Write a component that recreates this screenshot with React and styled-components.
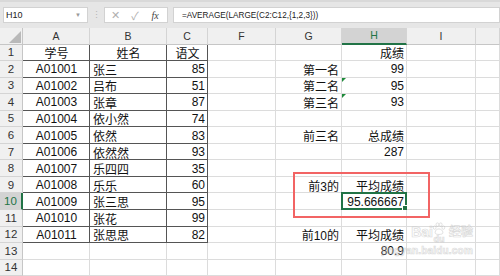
import { Fragment } from "react";
import styled, { createGlobalStyle } from "styled-components";

const GlobalStyle = createGlobalStyle`
  html, body {
    margin: 0;
    padding: 0;
    background: #ffffff;
  }
  body {
    font-family: "Liberation Sans", "Noto Sans CJK SC", sans-serif;
  }
`;

const Window = styled.div`
  position: relative;
  width: 500px;
  height: 276px;
  overflow: hidden;
  background: #ffffff;
`;

const FormulaBar = styled.div`
  height: 28px;
  box-sizing: border-box;
  display: flex;
  align-items: flex-start;
  padding: 5px 0 0 3px;
  background: #e6e6e6;
  border-top: 2px solid #d9d9d9;
`;

const Box = styled.div`
  height: 16px;
  box-sizing: border-box;
  background: #ffffff;
  border: 1px solid #d2d2d2;
  display: flex;
  align-items: center;
  width: ${(p) => p.$w || "auto"};
  flex: ${(p) => (p.$grow ? 1 : "none")};
`;

const NameText = styled.span`
  flex: 1;
  padding-left: 2px;
  font-size: 9px;
  color: #222;
`;

const Caret = styled.span`
  font-size: 6px;
  color: #9a9a9a;
  padding-right: 6px;
`;

const Dots = styled.div`
  width: 16px;
  height: 16px;
  display: flex;
  align-items: center;
  justify-content: center;
  font-size: 9px;
  color: #b5b5b5;
`;

const IconBtn = styled.span`
  width: 20px;
  display: flex;
  justify-content: center;
  font-size: ${(p) => p.$size || "10px"};
  color: ${(p) => p.$color || "#b0b0b0"};
  font-family: ${(p) => (p.$serif ? '"Liberation Serif", serif' : "inherit")};
  font-style: ${(p) => (p.$serif ? "italic" : "normal")};
`;

const Gap = styled.div`
  width: 5px;
`;

const FormulaText = styled.span`
  padding-left: 8px;
  font-size: 8.2px;
  color: #222;
  white-space: nowrap;
`;

const Sheet = styled.div`
  display: grid;
  grid-template-columns: 23px 67px 77px 41px 68px 66px 65px 69px 1fr;
  grid-template-rows: 16.5px repeat(14, 16.55px);
`;

const ColHead = styled.div`
  box-sizing: border-box;
  display: flex;
  align-items: center;
  justify-content: center;
  font-size: 10.5px;
  color: ${(p) => (p.$active ? "#217346" : "#333")};
  background: ${(p) => (p.$active ? "#d3d3d3" : "#f0f0f0")};
  border-right: 1px solid #d4d4d4;
  border-bottom: ${(p) => (p.$active ? "2px solid #217346" : "1px solid #c6c6c6")};
`;

const Corner = styled.div`
  box-sizing: border-box;
  background: #f0f0f0;
  border-right: 1px solid #c6c6c6;
  border-bottom: 1px solid #c6c6c6;
  display: flex;
  align-items: flex-end;
  justify-content: flex-end;
  padding: 0 1px 1px 0;
`;

const RowHead = styled.div`
  box-sizing: border-box;
  display: flex;
  align-items: center;
  justify-content: center;
  font-size: 11.5px;
  color: ${(p) => (p.$active ? "#217346" : "#333")};
  background: ${(p) => (p.$active ? "#d3d3d3" : "#f0f0f0")};
  border-right: ${(p) => (p.$active ? "2px solid #217346" : "1px solid #c6c6c6")};
  border-bottom: 1px solid #d4d4d4;
`;

const Cell = styled.div`
  position: relative;
  box-sizing: border-box;
  display: flex;
  align-items: center;
  justify-content: ${(p) =>
    p.$align === "right" ? "flex-end" : p.$align === "center" ? "center" : "flex-start"};
  padding: 1px 2px 0 3px;
  font-size: 12px;
  color: #111;
  white-space: nowrap;
  border-right: 1px solid ${(p) => (p.$boxed ? "#555" : "#dcdcdc")};
  border-bottom: 1px solid ${(p) => (p.$boxed ? "#555" : "#dcdcdc")};
`;

const ErrorMark = styled.span`
  position: absolute;
  left: 0;
  top: 0;
  width: 0;
  height: 0;
  border-top: 4px solid #1e8a3a;
  border-right: 4px solid transparent;
`;

const Selection = styled.span`
  position: absolute;
  left: -1px;
  top: -1px;
  right: -1px;
  bottom: -1px;
  border: 2px solid #217346;
  pointer-events: none;

  &::after {
    content: "";
    position: absolute;
    right: -3px;
    bottom: -3px;
    width: 4px;
    height: 4px;
    background: #217346;
    border: 1px solid #fff;
  }
`;

const Highlight = styled.div`
  position: absolute;
  left: 293px;
  top: 172px;
  width: 137px;
  height: 46px;
  box-sizing: border-box;
  border: 2px solid #f26464;
  pointer-events: none;
`;

const Watermark = styled.div`
  position: absolute;
  left: 375px;
  top: 222px;
  width: 98px;
  display: flex;
  flex-direction: column;
  align-items: flex-end;
  gap: 1px;
  pointer-events: none;
  opacity: 0.4;
`;

const MarkLine = styled.div`
  display: flex;
  align-items: center;
  font-family: "Liberation Sans", "Noto Sans CJK SC", sans-serif;
  font-weight: 700;
  font-size: ${(p) => p.$size};
  line-height: 1.1;
  color: #ffffff;
  -webkit-text-stroke: 0.7px #a8a8a8;
  letter-spacing: ${(p) => p.$spacing || "0"};
`;

const PawStack = styled.span`
  display: flex;
  flex-direction: column;
  align-items: center;
  font-size: 9px;
  line-height: 1;
  margin-left: -1px;
`;

const Small = styled.span`
  font-size: ${(p) => p.$size};
  margin-left: ${(p) => p.$ml || "0"};
`;

const cols = ["A", "B", "C", "F", "G", "H", "I", ""];

const rows = [
  [["学号", "center", true], ["姓名", "center", true], ["语文", "center", true], null, null, ["成绩", "right"]],
  [["A01001", "center", true], ["张三", "left", true], ["85", "right", true], null, ["第一名", "right"], ["99", "right"]],
  [["A01002", "center", true], ["吕布", "left", true], ["51", "right", true], null, ["第二名", "right"], ["95", "right", false, "err"]],
  [["A01003", "center", true], ["张章", "left", true], ["87", "right", true], null, ["第三名", "right"], ["93", "right", false, "err"]],
  [["A01004", "center", true], ["依小然", "left", true], ["74", "right", true]],
  [["A01005", "center", true], ["依然", "left", true], ["83", "right", true], null, ["前三名", "right"], ["总成绩", "right"]],
  [["A01006", "center", true], ["依然然", "left", true], ["93", "right", true], null, null, ["287", "right"]],
  [["A01007", "center", true], ["乐四四", "left", true], ["35", "right", true]],
  [["A01008", "center", true], ["乐乐", "left", true], ["60", "right", true], null, ["前3的", "right"], ["平均成绩", "right"]],
  [["A01009", "center", true], ["张三思", "left", true], ["95", "right", true], null, null, ["95.666667", "right", false, "sel"]],
  [["A01010", "center", true], ["张花", "left", true], ["99", "right", true]],
  [["A01011", "center", true], ["张思思", "left", true], ["82", "right", true], null, ["前10的", "right"], ["平均成绩", "right"]],
  [null, null, null, null, null, ["80.9", "right"]],
  [],
];

const Paw = () => (
  <svg width="14" height="13" viewBox="0 0 16 15">
    <g fill="#fff" stroke="#a8a8a8" strokeWidth="1">
      <ellipse cx="3" cy="6.5" rx="1.6" ry="2" />
      <ellipse cx="6.2" cy="3" rx="1.6" ry="2" />
      <ellipse cx="10" cy="3" rx="1.6" ry="2" />
      <ellipse cx="13" cy="6.5" rx="1.6" ry="2" />
      <path d="M3.5 12.5 C3.5 9 6 8 8 8 C10 8 12.5 9.5 12.5 12.5 C12.5 15 3.5 15 3.5 12.5 Z" />
    </g>
  </svg>
);

const App = () => {
  return (
    <Window>
      <GlobalStyle />
      <FormulaBar>
        <Box $w="85px">
          <NameText>H10</NameText>
          <Caret>▼</Caret>
        </Box>
        <Dots>⋮</Dots>
        <Box $w="64px">
          <IconBtn $size="11px">✕</IconBtn>
          <IconBtn $size="11px">✓</IconBtn>
          <IconBtn $serif $color="#444" $size="10px">fx</IconBtn>
        </Box>
        <Gap />
        <Box $grow>
          <FormulaText>=AVERAGE(LARGE(C2:C12,{"{1,2,3}"}))</FormulaText>
        </Box>
      </FormulaBar>
      <Sheet>
        <Corner>
          <svg width="12" height="12" viewBox="0 0 12 12">
            <polygon points="12,0 12,12 0,12" fill="#b9b9b9" />
          </svg>
        </Corner>
        {cols.map((c) => (
          <ColHead key={c || "end"} $active={c === "H"}>
            {c}
          </ColHead>
        ))}
        {rows.map((r, i) => (
          <Fragment key={`r${i}`}>
            <RowHead $active={i === 9}>{i + 1}</RowHead>
            {cols.map((c, j) => {
              const v = r[j];
              return (
                <Cell
                  key={`${i}-${j}`}
                  $align={v ? v[1] : "left"}
                  $boxed={v ? v[2] : false}
                >
                  {v ? v[0] : ""}
                  {v && v[3] === "err" && <ErrorMark />}
                  {v && v[3] === "sel" && <Selection />}
                </Cell>
              );
            })}
          </Fragment>
        ))}
      </Sheet>
      <Highlight />
      <Watermark>
        <MarkLine $size="14px">
          Bai
          <PawStack>
            <Paw />
            du
          </PawStack>
          <Small $size="12px" $ml="3px">经验</Small>
        </MarkLine>
        <MarkLine $size="10px" $spacing="0.2px">
          jingyan.baidu.com
        </MarkLine>
      </Watermark>
    </Window>
  );
};

export default App;
